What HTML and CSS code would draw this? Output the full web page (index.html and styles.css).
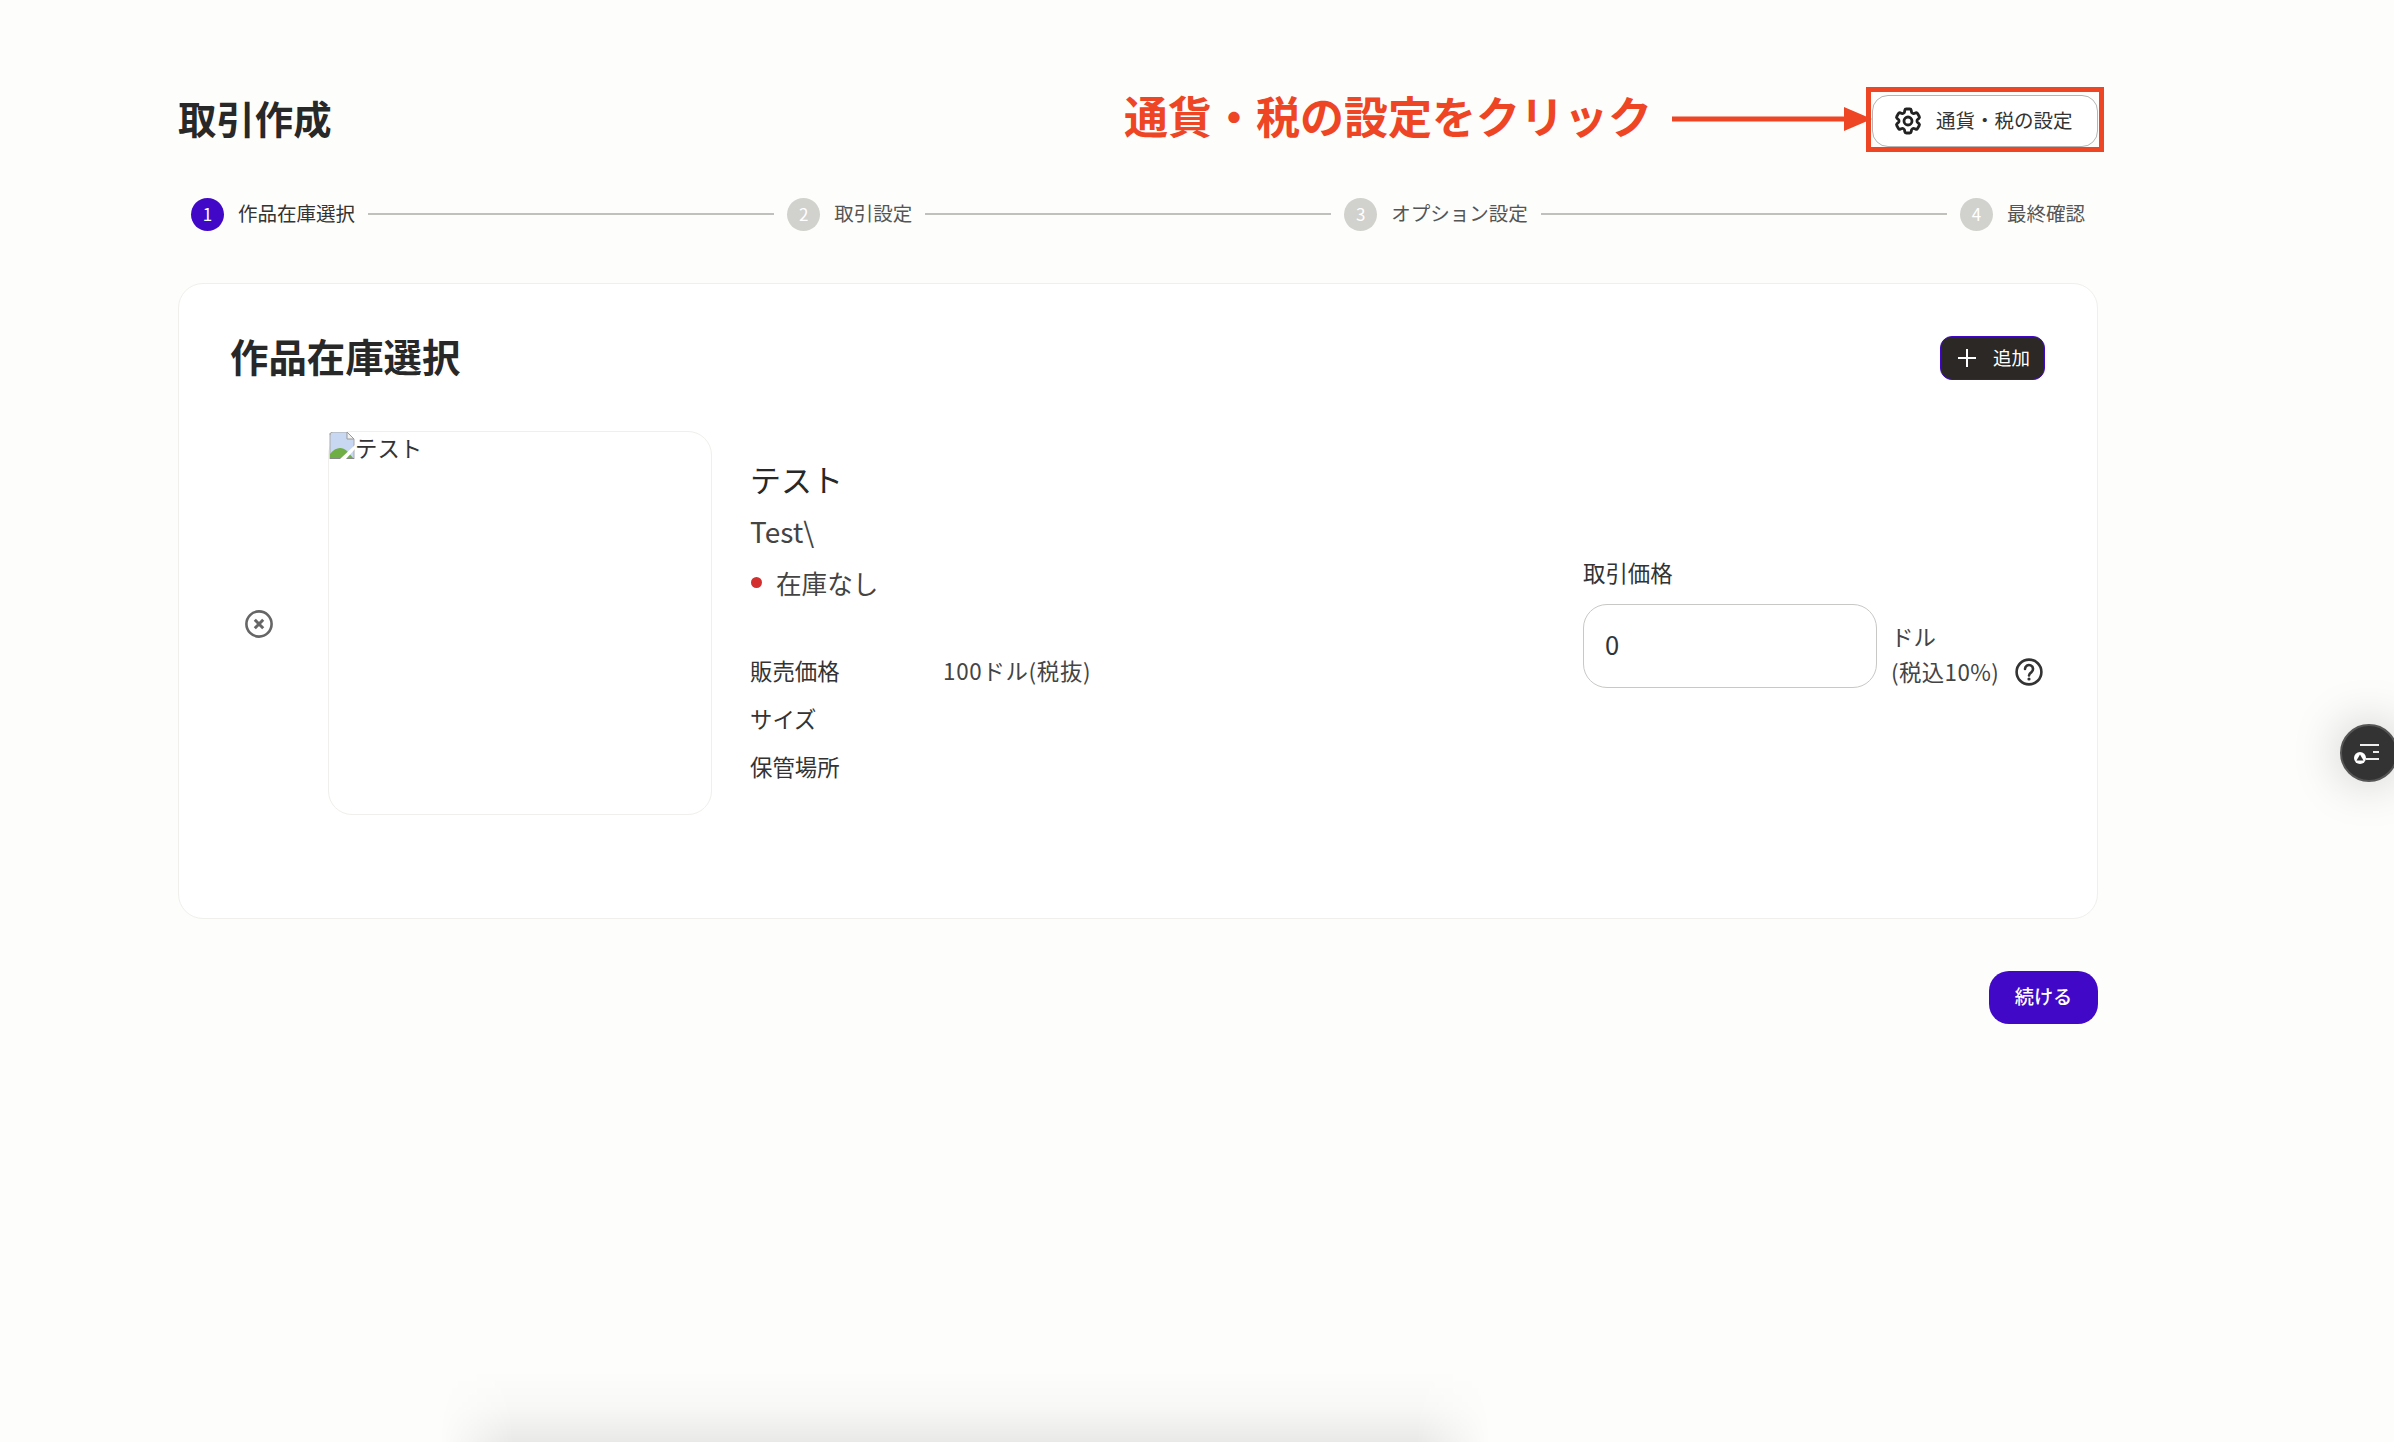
FILE: index.html
```html
<!DOCTYPE html>
<html lang="ja">
<head>
<meta charset="utf-8">
<title>取引作成</title>
<link rel="stylesheet" href="styles.css">
</head>
<body>
<main class="page">
  <header class="top">
    <h1 class="title">取引作成</h1>
    <button class="settings">
      <svg class="gear" viewBox="0 0 24 24" fill="none" stroke="#222" stroke-width="2.1" stroke-linejoin="round"><path d="M9.594 3.94c.09-.542.56-.94 1.11-.94h2.593c.55 0 1.02.398 1.11.94l.213 1.281c.063.374.313.686.645.87.074.04.147.083.22.127.325.196.72.257 1.075.124l1.217-.456a1.125 1.125 0 0 1 1.37.49l1.296 2.247a1.125 1.125 0 0 1-.26 1.431l-1.003.827c-.293.241-.438.613-.43.992a7.723 7.723 0 0 1 0 .255c-.008.378.137.75.43.991l1.004.827c.424.35.534.955.26 1.43l-1.298 2.247a1.125 1.125 0 0 1-1.369.491l-1.217-.456c-.355-.133-.75-.072-1.076.124a6.47 6.47 0 0 1-.22.128c-.331.183-.581.495-.644.869l-.213 1.281c-.09.543-.56.94-1.11.94h-2.594c-.55 0-1.019-.398-1.11-.94l-.213-1.281c-.062-.374-.312-.686-.644-.87a6.52 6.52 0 0 1-.22-.127c-.325-.196-.72-.257-1.076-.124l-1.217.456a1.125 1.125 0 0 1-1.369-.49l-1.297-2.247a1.125 1.125 0 0 1 .26-1.431l1.004-.827c.292-.24.437-.613.43-.991a6.932 6.932 0 0 1 0-.255c.007-.38-.138-.751-.43-.992l-1.004-.827a1.125 1.125 0 0 1-.26-1.43l1.297-2.247a1.125 1.125 0 0 1 1.37-.491l1.216.456c.356.133.751.072 1.076-.124.072-.044.146-.086.22-.128.332-.183.582-.495.644-.869l.214-1.28Z"/><circle cx="12" cy="12" r="3"/></svg>
      <span>通貨・税の設定</span>
    </button>
  </header>

  <ol class="stepper">
    <li class="step active"><span class="dot">1</span><span class="step-label">作品在庫選択</span></li>
    <li class="rule"></li>
    <li class="step"><span class="dot">2</span><span class="step-label">取引設定</span></li>
    <li class="rule"></li>
    <li class="step"><span class="dot">3</span><span class="step-label">オプション設定</span></li>
    <li class="rule"></li>
    <li class="step"><span class="dot">4</span><span class="step-label">最終確認</span></li>
  </ol>

  <section class="card">
    <div class="card-head">
      <h2 class="card-title">作品在庫選択</h2>
      <button class="add">
        <svg class="plus" viewBox="0 0 18 18" stroke="#fff" stroke-width="2"><path d="M9 0v18M0 9h18"/></svg>
        <span>追加</span>
      </button>
    </div>
    <div class="item">
      <svg class="remove" viewBox="0 0 28 28" fill="none" stroke="#666" stroke-width="2.6"><circle cx="14" cy="14" r="12.6"/><path d="M9.8 9.8l8.4 8.4M18.200 9.800l-8.400 8.400" stroke-width="3"/></svg>
      <div class="thumb">
        <svg class="broken" viewBox="0 0 26 27">
          <path d="M1 3a3 3 0 0 1 3-3h14l7 7v20H1z" fill="#c9d8f2"/>
          <path d="M18 0l7 7h-7z" fill="#f2f2f2" stroke="#999" stroke-width="1"/>
          <path d="M1 1v26M1 3a3 3 0 0 1 3-3h14M25 7v20" fill="none" stroke="#aaa" stroke-width="1"/>
          <path d="M1 27v-5c5-7 12-8 17-3l7 8z" fill="#6fae45"/>
          <path d="M1 26h24v1H1z" fill="#888"/>
          <path d="M11 27l15-14v4L17 27z" fill="#fff"/>
        </svg>
        <span class="alt">テスト</span>
      </div>
      <div class="info">
        <div class="name">テスト</div>
        <div class="sub">Test\</div>
        <div class="stock"><i class="stock-dot"></i>在庫なし</div>
        <dl class="specs">
          <div class="spec"><dt>販売価格</dt><dd>100ドル(税抜)</dd></div>
          <div class="spec"><dt>サイズ</dt><dd></dd></div>
          <div class="spec"><dt>保管場所</dt><dd></dd></div>
        </dl>
      </div>
      <div class="price">
        <label class="price-label" for="price">取引価格</label>
        <div class="price-row">
          <input id="price" class="price-input" value="0">
          <div class="unit">
            <div>ドル</div>
            <div class="tax"><span class="tax-text">(税込10%)</span>
              <svg class="help" viewBox="0 0 28 28" fill="none" stroke="#333" stroke-width="2.600"><circle cx="14" cy="14" r="12.400"/><path d="M10 11a4 4 0 1 1 6.500 3.100c-1.500 1.100-2.500 1.900-2.500 3.400" stroke-linecap="round"/><circle cx="14" cy="21" r="1.600" fill="#333" stroke="none"/></svg>
            </div>
          </div>
        </div>
      </div>
    </div>
  </section>

  <div class="actions"><button class="next">続ける</button></div>
</main>

<div class="note">
  <div class="note-box"></div>
  <div class="note-text">通貨・税の設定をクリック</div>
  <svg class="note-arrow" viewBox="0 0 200 26"><path d="M0 10.500h172V1l28 12-28 12v-9.500H0z" fill="#ee4524"/></svg>
</div>

<button class="fab" aria-label="メニュー">
  <svg viewBox="0 0 34 28" class="fab-icon">
    <path d="M8 3h19M21 10h6M14 17h13" stroke="#eee" stroke-width="2" fill="none"/>
    <circle cx="8" cy="16" r="6" fill="#fff"/>
    <path d="M8 12.500l3.500 6h-7z" fill="#333"/>
  </svg>
</button>
<div class="toast-shadow"></div>
</body>
</html>
```

FILE: styles.css
```css
* { box-sizing: border-box; }
html, body { margin: 0; height: 1442px; overflow: hidden; }
body {
  position: relative;
  background: #fdfdfb;
  color: #333;
  font-family: "Noto Sans CJK JP", "Noto Sans", sans-serif;
}
button, input { font-family: inherit; }

.page { width: 1920px; margin-left: 178px; padding-top: 95px; }

.top { display: flex; justify-content: space-between; align-items: center; height: 52px; }
.title { margin: -9px 0 0; font-size: 38.4px; line-height: 48px; font-weight: 700; color: #282828; }
.settings {
  display: flex; align-items: center; gap: 12px;
  width: 226px; height: 52px; padding: 0 0 3px 19px;
  background: #fff; border: 1.5px solid #b5b5b5; border-radius: 16px;
  font-size: 19.5px; color: #333;
}
.gear { width: 32px; height: 32px; flex: none; margin-top: 3px; }

.stepper { display: flex; align-items: center; list-style: none; margin: 51px 0 0; padding: 0 13px; height: 33px; }
.step { display: flex; align-items: center; gap: 14px; flex: none; }
.dot {
  width: 33px; height: 33px; border-radius: 50%;
  background: #d1d1cd; color: #fff; font-size: 17px; padding-bottom: 2px;
  display: flex; align-items: center; justify-content: center;
}
.active .dot { background: #4109c7; }
.step-label { font-size: 19.5px; line-height: 28px; margin-top: -3px; color: #555; }
.active .step-label { color: #333; }
.rule { flex: 1; height: 2px; margin: -1px 13px 0; background: #c0c0bc; }

.card {
  margin-top: 52px; height: 636px; padding: 52px 52px 0 51px;
  background: #fff; border: 1.5px solid #f0efeb; border-radius: 25px;
}
.card-head { display: flex; justify-content: space-between; align-items: center; height: 44px; }
.card-title { margin: -6px 0 0; font-size: 38.4px; line-height: 48px; font-weight: 700; color: #282828; }
.add {
  display: flex; align-items: center; gap: 17px;
  width: 105px; height: 44px; padding: 0 0 3px 17px;
  background: #2b2825; border: 1.5px solid #4109c7; border-radius: 12px;
  color: #fff; font-size: 18.5px;
}
.plus { width: 18px; height: 18px; flex: none; margin-top: 3px; }

.item { display: flex; align-items: center; margin-top: 51px; }
.remove { width: 28px; height: 28px; flex: none; margin: 2px 0 0 15px; }
.thumb {
  display: flex; align-items: flex-start; flex: none;
  width: 384px; height: 384px; margin-left: 55px;
  border: 1.5px solid #f0efeb; border-radius: 24px; background: #fff;
}
.broken { width: 26px; height: 27px; flex: none; }
.alt { font-size: 22.4px; line-height: 31px; color: #333; }

.info { align-self: flex-start; margin: 22px 0 0 38px; }
.name { font-size: 31px; line-height: 52px; color: #282828; }
.sub { font-size: 28px; line-height: 52px; color: #444; }
.stock { display: flex; align-items: center; font-size: 25.6px; line-height: 52px; color: #444; }
.stock-dot { width: 11px; height: 11px; margin: -2px 14px 0 1px; border-radius: 50%; background: #d32f2f; }
.specs { margin: 37px 0 0; }
.spec { display: flex; height: 48px; align-items: center; font-size: 22.4px; color: #333; }
.spec dt { width: 193px; }
.spec dd { margin: 0; color: #444; letter-spacing: .7px; }

.price { margin-left: auto; width: 462px; }
.price-label { display: block; font-size: 22.4px; line-height: 34px; margin-bottom: 15px; margin-top: -4px; color: #333; }
.price-row { display: flex; align-items: flex-end; gap: 14px; }
.price-input {
  width: 294px; height: 84px; padding: 0 21px 4px;
  border: 1.5px solid #c8c8c6; border-radius: 24px; outline: none;
  background: #fff; color: #333; font-size: 25.6px;
}
.unit { font-size: 22.4px; line-height: 35px; color: #444; margin-bottom: -1px; }
.tax { display: flex; align-items: center; gap: 16px; }
.tax-text { letter-spacing: .4px; }
.help { width: 28px; height: 28px; flex: none; margin-top: 2px; }

.actions { display: flex; justify-content: flex-end; margin-top: 52px; }
.next {
  width: 109px; height: 53px; border: 0; border-radius: 20px; padding: 0 0 3px;
  background: #4109c7; color: #fff; font-size: 19.2px; font-weight: 500;
}

/* annotation drawn on top of the page */
.note { position: absolute; inset: 0; pointer-events: none; }
.note-box { position: absolute; left: 1866px; top: 87px; width: 238px; height: 65px; border: 5px solid #ee4524; }
.note-text { position: absolute; left: 1124px; top: 83px; font-size: 44px; line-height: 64px; font-weight: 700; color: #ee4524; white-space: nowrap; }
.note-arrow { position: absolute; left: 1672px; top: 106px; width: 200px; height: 26px; }

.fab {
  position: absolute; left: 2340px; top: 724px; width: 58px; height: 58px; padding: 0;
  border: 2px solid #555; border-radius: 50%; background: #333;
  box-shadow: 0 0 50px rgba(0,0,0,.22);
}
.fab-icon { position: absolute; left: 10px; top: 16px; width: 34px; height: 28px; }

.toast-shadow {
  position: absolute; left: 440px; right: 904px; bottom: 0; height: 72px;
  background: linear-gradient(to top, rgba(0,0,0,.08), rgba(0,0,0,.02) 50%, rgba(0,0,0,0));
  -webkit-mask-image: linear-gradient(to right, transparent, #000 7%, #000 93%, transparent);
  mask-image: linear-gradient(to right, transparent, #000 7%, #000 93%, transparent);
}
```
